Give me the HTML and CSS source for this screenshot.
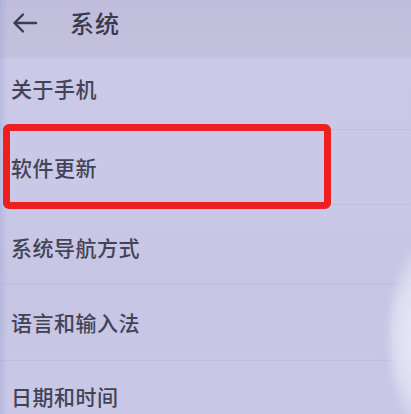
FILE: index.html
```html
<!DOCTYPE html>
<html lang="zh">
<head>
<meta charset="utf-8">
<link rel="stylesheet" href="styles.css">
</head>
<body>
<div class="screen">
  <header class="topbar">
    <svg class="back" viewBox="0 0 26 22" width="26" height="22" aria-hidden="true">
      <path d="M24 11H3 M11 2.5L2.5 11L11 19.5" fill="none" stroke="#3c3c4c" stroke-width="2.4" stroke-linecap="round" stroke-linejoin="round"/>
    </svg>
    <h1 class="title">系统</h1>
  </header>
  <ul class="list">
    <li class="row"><span class="label">关于手机</span></li>
    <li class="row row-marked"><span class="label">软件更新</span><span class="mark"></span></li>
    <li class="row row-tall"><span class="label">系统导航方式</span></li>
    <li class="row"><span class="label">语言和输入法</span></li>
    <li class="row row-short"><span class="label">日期和时间</span></li>
  </ul>
  <div class="glare"></div>
</div>
</body>
</html>
```

FILE: styles.css
```css
* { box-sizing: border-box; }
html, body {
  margin: 0;
  padding: 0;
  width: 411px;
  height: 414px;
  overflow: hidden;
}
body {
  font-family: "Noto Sans CJK SC", "Noto Sans", sans-serif;
  color: #404052;
}
.screen {
  position: relative;
  width: 411px;
  height: 414px;
  overflow: hidden;
  background:
    linear-gradient(90deg, rgba(150,160,210,0.35) 0px, rgba(150,160,210,0) 8px),
    linear-gradient(180deg, #bfbddb 0px, #c3c1de 56px, #cac9e7 60px, #c9c8e6 200px, #c6c5e3 280px, #c9c8e6 414px);
}
.topbar {
  height: 46px;
  display: flex;
  align-items: center;
  padding-left: 12px;
  gap: 32px;
}
.back { display: block; }
.title {
  margin: 0;
  font-size: 24px;
  font-weight: 500;
  color: #3a3a4c;
  letter-spacing: 1px;
  line-height: 1;
}
.list {
  list-style: none;
  margin: 0;
  padding: 0;
}
.row {
  position: relative;
  height: 76px;
  display: flex;
  align-items: center;
  padding-left: 11px;
  border-bottom: 1px solid rgba(165,163,205,0.22);
}
.row:first-child { height: 84px; padding-top: 2px; }
.row-marked { height: 75px; }
.row-tall { height: 80px; padding-top: 6px; }
.row-short { height: 72px; }
.label {
  font-size: 21px;
  font-weight: 500;
  line-height: 1;
  letter-spacing: 0.5px;
  color: #434356;
}
.mark {
  position: absolute;
  left: 3px;
  top: -6px;
  width: 328px;
  height: 85px;
  border: 7px solid #ec2020;
  border-radius: 6px;
}
.glare {
  position: absolute;
  left: 388px;
  top: 236px;
  width: 90px;
  height: 200px;
  border-radius: 50%;
  background: radial-gradient(ellipse at 45% 50%, rgba(245,246,255,0.85) 0%, rgba(236,238,252,0.6) 45%, rgba(220,222,245,0) 70%);
  filter: blur(3px);
}
```
